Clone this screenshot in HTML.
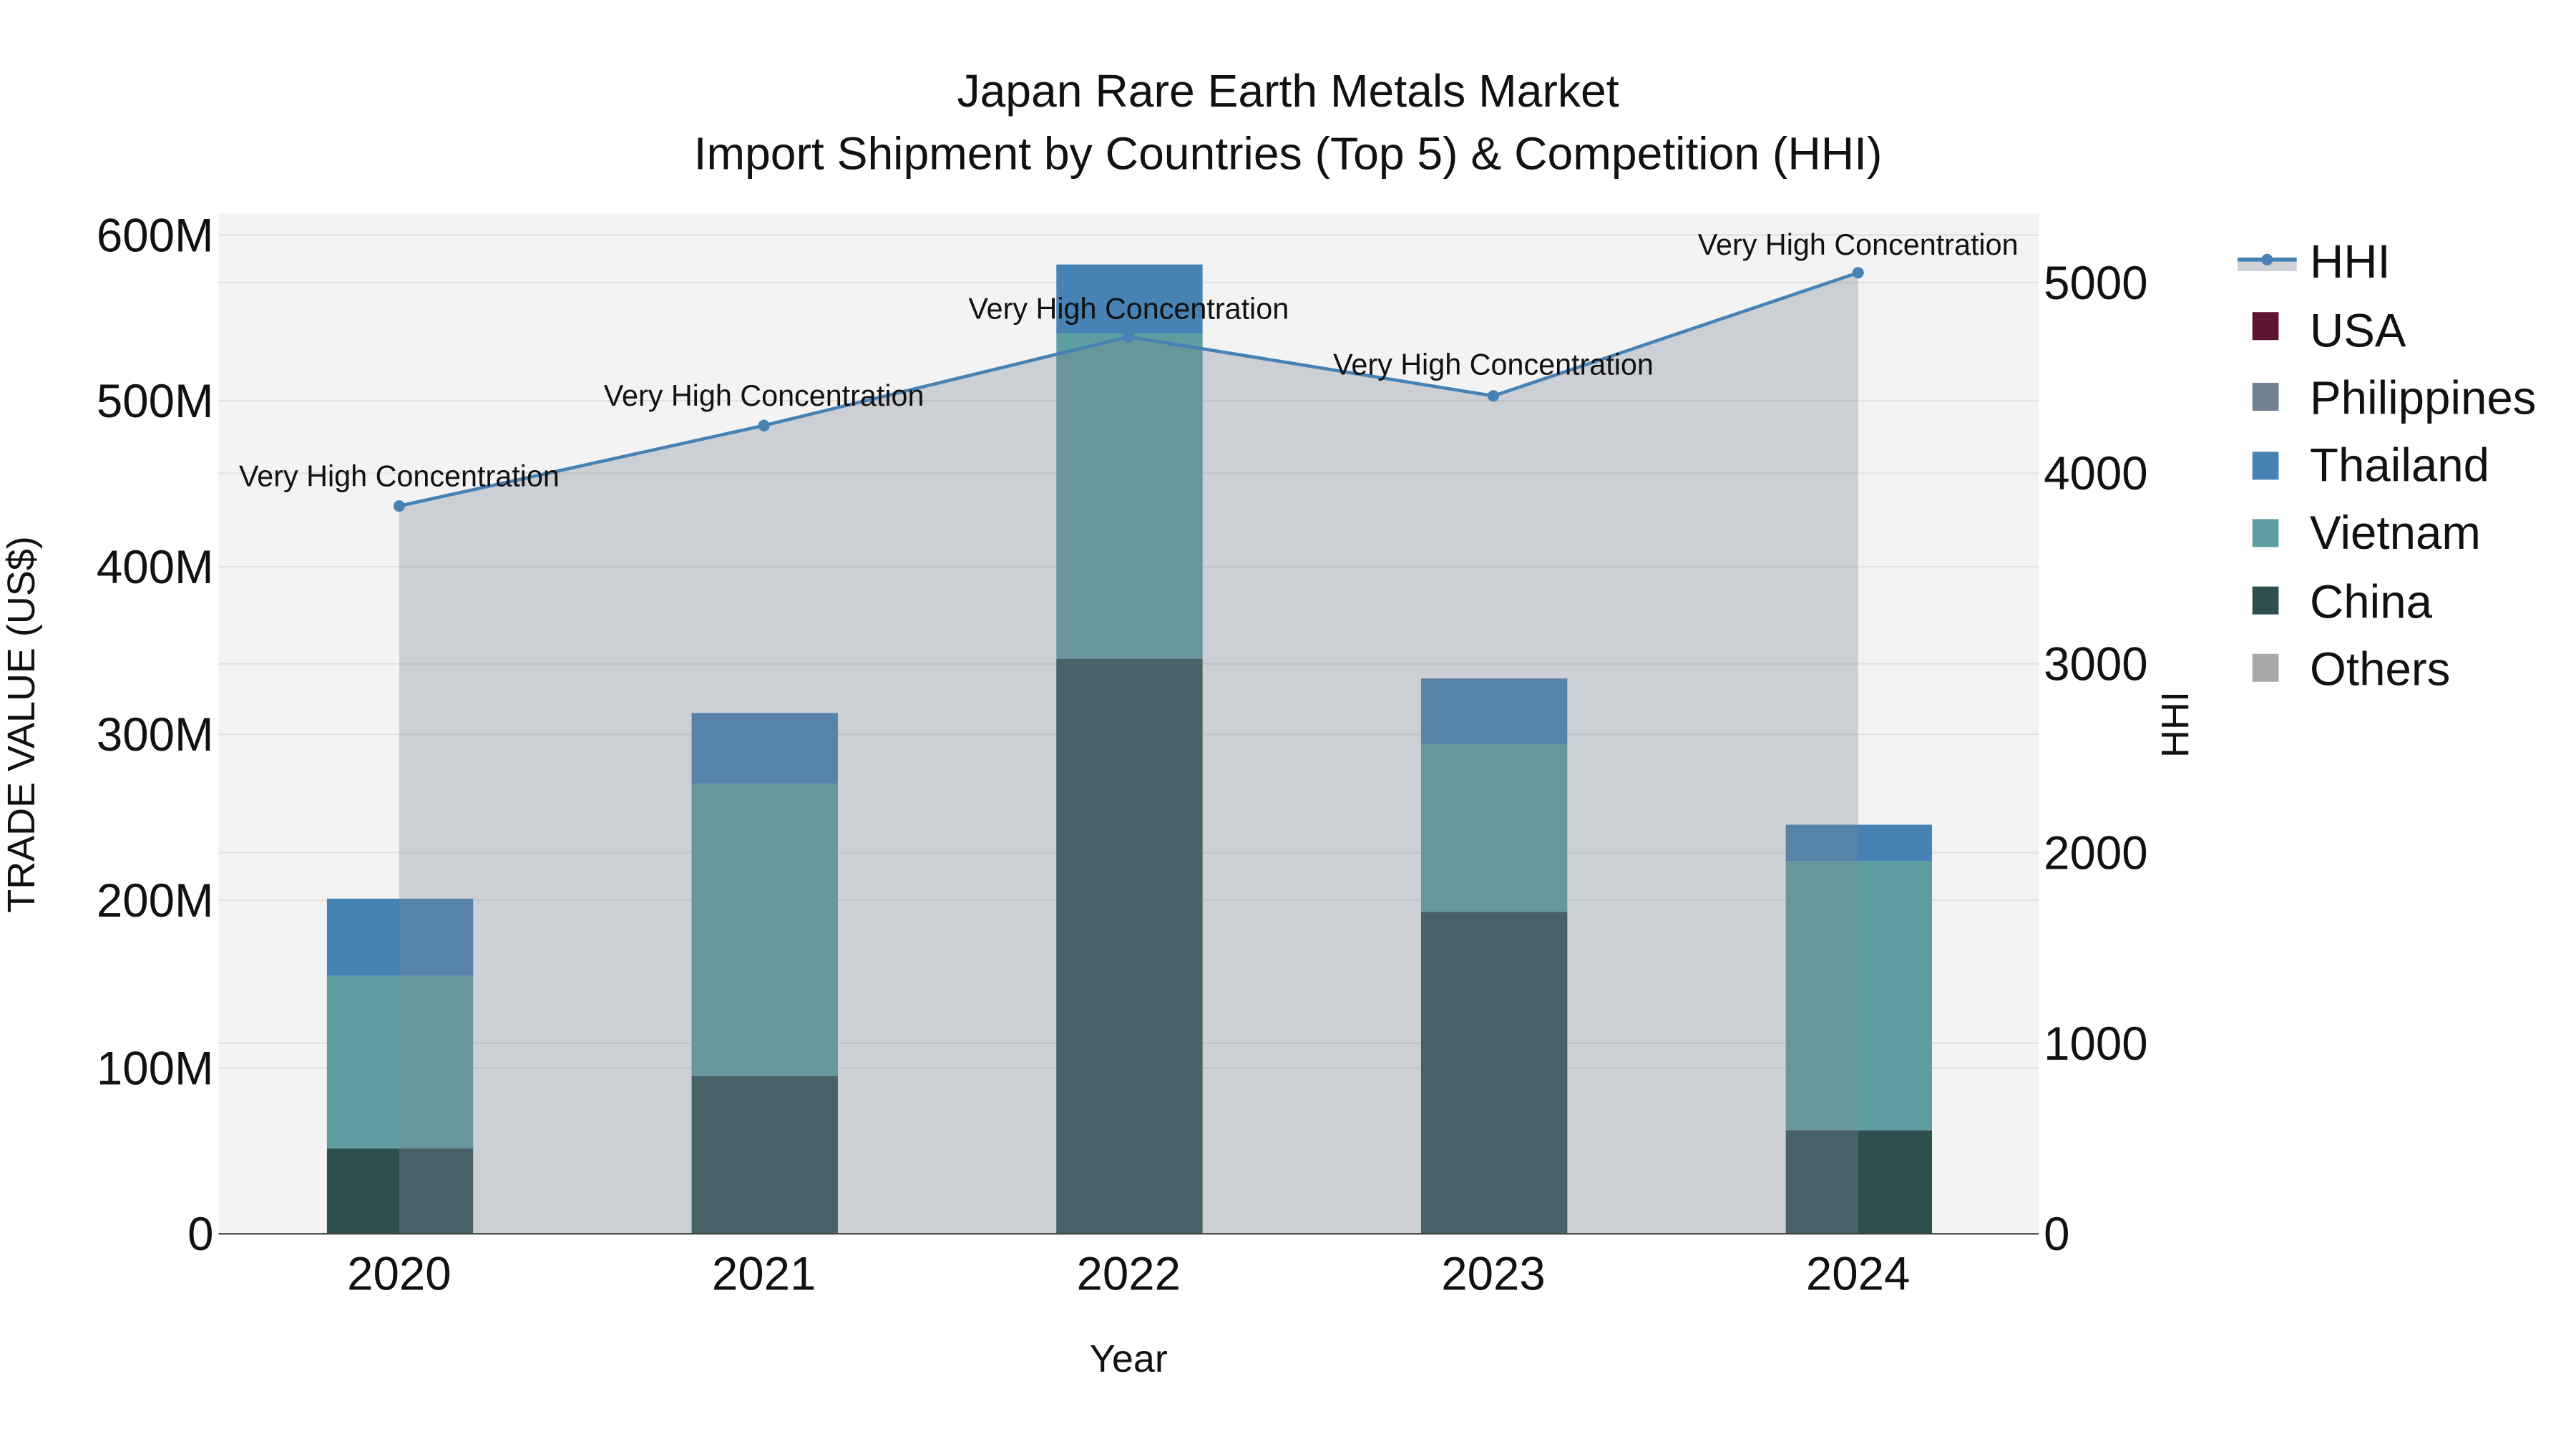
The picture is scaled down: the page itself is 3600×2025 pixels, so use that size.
<!DOCTYPE html>
<html><head><meta charset="utf-8"><style>
html,body{margin:0;padding:0;background:#fff;}
svg{display:block;}
text{font-family:"Liberation Sans",sans-serif;fill:#111;}
</style></head><body>
<svg width="3600" height="2025" viewBox="0 0 1568 882" preserveAspectRatio="none" xmlns="http://www.w3.org/2000/svg">
<rect x="0" y="0" width="1568" height="882" fill="#fff"/>
<rect x="133" y="130" width="1108" height="621" fill="#f3f3f3"/>
<g stroke="#e2e2e2" stroke-width="1">
<line x1="133" x2="1241" y1="650" y2="650"/><line x1="133" x2="1241" y1="548" y2="548"/>
<line x1="133" x2="1241" y1="447" y2="447"/><line x1="133" x2="1241" y1="345" y2="345"/>
<line x1="133" x2="1241" y1="244" y2="244"/><line x1="133" x2="1241" y1="143" y2="143"/>
<line x1="133" x2="1241" y1="172" y2="172"/><line x1="133" x2="1241" y1="288" y2="288"/>
<line x1="133" x2="1241" y1="404" y2="404"/><line x1="133" x2="1241" y1="519" y2="519"/>
<line x1="133" x2="1241" y1="635" y2="635"/>
</g>
<g>
<rect x="199" y="699" width="89" height="52" fill="#2f4f4f"/>
<rect x="199" y="594" width="89" height="105" fill="#5f9ea0"/>
<rect x="199" y="547" width="89" height="47" fill="#4682b4"/>
<rect x="421" y="655" width="89" height="96" fill="#2f4f4f"/>
<rect x="421" y="477" width="89" height="178" fill="#5f9ea0"/>
<rect x="421" y="434" width="89" height="43" fill="#4682b4"/>
<rect x="643" y="401" width="89" height="350" fill="#2f4f4f"/>
<rect x="643" y="203" width="89" height="198" fill="#5f9ea0"/>
<rect x="643" y="161" width="89" height="42" fill="#4682b4"/>
<rect x="865" y="555" width="89" height="196" fill="#2f4f4f"/>
<rect x="865" y="453" width="89" height="102" fill="#5f9ea0"/>
<rect x="865" y="413" width="89" height="40" fill="#4682b4"/>
<rect x="1087" y="688" width="89" height="63" fill="#2f4f4f"/>
<rect x="1087" y="524" width="89" height="164" fill="#5f9ea0"/>
<rect x="1087" y="502" width="89" height="22" fill="#4682b4"/>
</g>
<polygon points="243,751 243,308 465,259 687,205 909,241 1131,166 1131,751" fill="rgb(125,135,150)" fill-opacity="0.33"/>
<line x1="133" x2="1241" y1="751" y2="751" stroke="#444" stroke-width="1"/>
<polyline points="243,308 465,259 687,205 909,241 1131,166" fill="none" stroke="#4682b4" stroke-width="2"/>
<g fill="#4682b4"><circle cx="243" cy="308" r="3.5"/><circle cx="465" cy="259" r="3.5"/><circle cx="687" cy="205" r="3.5"/><circle cx="909" cy="241" r="3.5"/><circle cx="1131" cy="166" r="3.5"/></g>
<g font-size="18" text-anchor="middle">
<text x="243" y="296">Very High Concentration</text>
<text x="465" y="247">Very High Concentration</text>
<text x="687" y="194">Very High Concentration</text>
<text x="909" y="228">Very High Concentration</text>
<text x="1131" y="155">Very High Concentration</text>
</g>
<g text-anchor="middle" font-size="28">
<text x="784" y="65">Japan Rare Earth Metals Market</text>
<text x="784" y="103">Import Shipment by Countries (Top 5) &amp; Competition (HHI)</text>
</g>
<g font-size="28.5" text-anchor="end">
<text x="130" y="761">0</text><text x="130" y="660">100M</text><text x="130" y="558">200M</text>
<text x="130" y="457">300M</text><text x="130" y="355">400M</text><text x="130" y="254">500M</text><text x="130" y="153">600M</text>
</g>
<g font-size="28.5" text-anchor="start">
<text x="1244" y="761">0</text><text x="1244" y="645">1000</text><text x="1244" y="529">2000</text>
<text x="1244" y="414">3000</text><text x="1244" y="298">4000</text><text x="1244" y="182">5000</text>
</g>
<g font-size="28.5" text-anchor="middle">
<text x="243" y="785">2020</text><text x="465" y="785">2021</text><text x="687" y="785">2022</text><text x="909" y="785">2023</text><text x="1131" y="785">2024</text>
</g>
<text x="687" y="835" font-size="23.5" text-anchor="middle">Year</text>
<text transform="translate(21,441) rotate(-90)" font-size="23.5" text-anchor="middle">TRADE VALUE (US$)</text>
<text transform="translate(1332,441) rotate(-90)" font-size="23.5" text-anchor="middle">HHI</text>
<rect x="1362" y="159" width="36" height="6" fill="#ced2d8"/>
<line x1="1362" x2="1398" y1="158" y2="158" stroke="#4682b4" stroke-width="2.5"/>
<circle cx="1380" cy="158" r="3.5" fill="#4682b4"/>
<rect x="1371" y="190" width="16" height="17" fill="#5e1433"/>
<rect x="1371" y="233" width="16" height="17" fill="#708090"/>
<rect x="1371" y="275" width="16" height="17" fill="#4682b4"/>
<rect x="1371" y="316" width="16" height="17" fill="#5f9ea0"/>
<rect x="1371" y="357" width="16" height="17" fill="#2f4f4f"/>
<rect x="1371" y="398" width="16" height="17" fill="#a9a9a9"/>
<g font-size="28.5">
<text x="1406" y="169">HHI</text>
<text x="1406" y="211">USA</text>
<text x="1406" y="252">Philippines</text>
<text x="1406" y="293">Thailand</text>
<text x="1406" y="334">Vietnam</text>
<text x="1406" y="376">China</text>
<text x="1406" y="417">Others</text>
</g>
</svg>
</body></html>
